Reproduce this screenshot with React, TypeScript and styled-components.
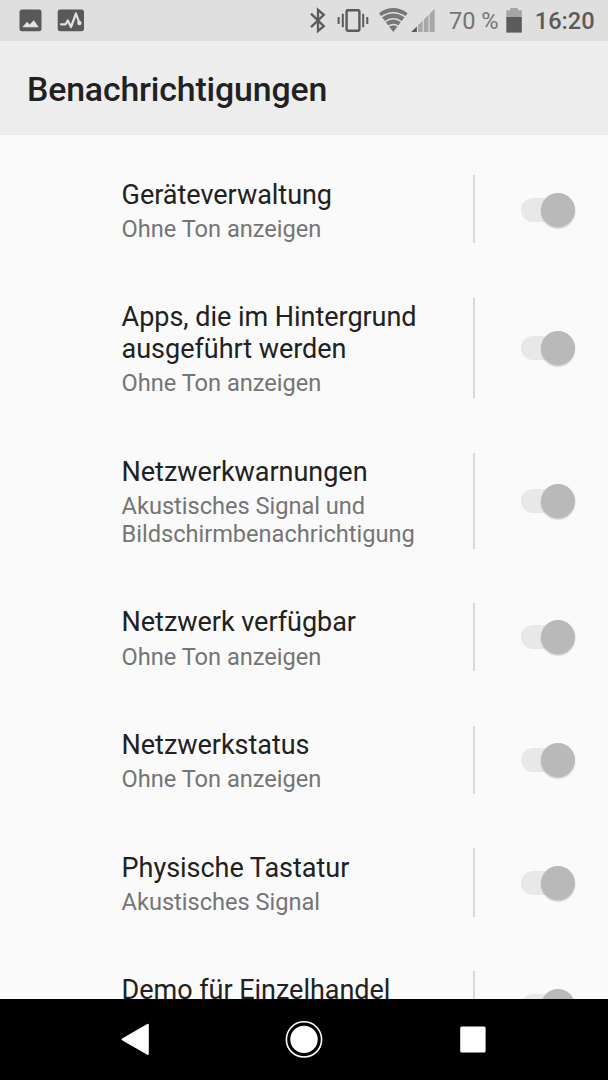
import React from 'react';
import styled, { createGlobalStyle } from 'styled-components';

const GlobalStyle = createGlobalStyle`
  html, body { margin: 0; padding: 0; }
  body { background: #fafafa; font-family: Roboto, sans-serif; overflow: hidden; }
`;

const Screen = styled.div`
  display: flex;
  flex-direction: column;
  width: 608px;
  height: 1080px;
  overflow: hidden;
  background: #fafafa;
`;

const StatusBar = styled.div`
  display: flex;
  flex: none;
  justify-content: space-between;
  height: 41px;
  background: #dfdfdf;
`;

const StatusIcons = styled.svg`
  display: block;
  flex: none;
`;

const StatusGroup = styled.div`
  display: flex;
  align-items: center;
`;

const StatusText = styled.span<{ $color: string; $width: number; $weight: number; $indent?: number }>`
  width: ${p => p.$width}px;
  padding: 1px 0 0 ${p => p.$indent ?? 0}px;
  box-sizing: border-box;
  color: ${p => p.$color};
  font-size: 23.6px;
  line-height: 41px;
  font-weight: ${p => p.$weight};
  white-space: nowrap;
`;

const Header = styled.header`
  display: flex;
  flex: none;
  align-items: center;
  height: 94px;
  padding: 3px 27px 0;
  box-sizing: border-box;
  background: #ededed;
`;

const Heading = styled.h1`
  margin: 0;
  color: #212121;
  font-size: 33.8px;
  font-weight: 500;
  line-height: 41px;
  letter-spacing: -0.14px;
  white-space: nowrap;
`;

const List = styled.main`
  display: flex;
  flex: 1;
  flex-direction: column;
  gap: 54.4px;
  min-height: 0;
  padding-top: 40.2px;
  overflow: hidden;
`;

const Row = styled.section`
  display: flex;
  flex: none;
  min-height: 68.3px;
  padding-left: 121.6px;
`;

const Texts = styled.div`
  width: 353.7px;
  padding-top: 3.4px;
  box-sizing: border-box;
  border-right: 2px solid #d8d8d8;
  white-space: nowrap;
`;

const Title = styled.div`
  color: #212121;
  font-size: 27.02px;
  line-height: 32px;
  letter-spacing: -0.04px;
`;

const SummaryBlock = styled.div`
  padding-top: 5.2px;
`;

const Summary = styled.div`
  color: #757575;
  font-size: 23.64px;
  line-height: 27.7px;
  letter-spacing: -0.03px;
`;

const SwitchCell = styled.div`
  display: flex;
  flex: 1;
  align-items: center;
  padding: 0.8px 0 0 46.2px;
`;

const Track = styled.div`
  display: flex;
  align-items: center;
  justify-content: flex-end;
  width: 54px;
  height: 24px;
  border-radius: 12px;
  background: linear-gradient(90deg, #e8e8e8 34px, transparent 34px);
`;

const Thumb = styled.div`
  width: 34px;
  height: 34px;
  border-radius: 50%;
  background: #b9b9b9;
  box-shadow: 0 1.5px 1.5px rgba(0, 0, 0, 0.2);
`;

const NavBar = styled.nav`
  flex: none;
  height: 81px;
  background: #000;
`;

const rows = [
  { title: ['Geräteverwaltung'], summary: ['Ohne Ton anzeigen'] },
  { title: ['Apps, die im Hintergrund', 'ausgeführt werden'], summary: ['Ohne Ton anzeigen'] },
  { title: ['Netzwerkwarnungen'], summary: ['Akustisches Signal und', 'Bildschirmbenachrichtigung'] },
  { title: ['Netzwerk verfügbar'], summary: ['Ohne Ton anzeigen'] },
  { title: ['Netzwerkstatus'], summary: ['Ohne Ton anzeigen'] },
  { title: ['Physische Tastatur'], summary: ['Akustisches Signal'] },
  { title: ['Demo für Einzelhandel'], summary: [] },
];

const NotificationGlyphs = () => (
  <StatusIcons width="100" height="41" viewBox="0 0 100 41">
    <rect x="19.5" y="9.5" width="22" height="21.7" rx="2.5" fill="#595959" />
    <path d="M22.3 27.2 L27 21.8 L29.6 24.6 L33.8 20.2 L38.8 27.2Z" fill="#e2e2e2" />
    <rect x="57.7" y="9.5" width="26.3" height="21.7" rx="2.5" fill="#595959" />
    <path d="M61 24.3H65.6L67.8 20.5L71 27L76 13.5L79.3 23" fill="none" stroke="#e2e2e2" strokeWidth="2.2" strokeLinejoin="round" strokeLinecap="round" />
    <circle cx="79.4" cy="23" r="2.2" fill="#e2e2e2" />
  </StatusIcons>
);

const ConnectivityGlyphs = () => (
  <StatusIcons width="144" height="41" viewBox="305 0 144 41">
    <path d="M311 13.6L323.8 26.2L318 31V9.8L323.8 14.8L311 27.2" fill="none" stroke="#5b5b5b" strokeWidth="2.3" />
    <rect x="346.6" y="10.2" width="12.8" height="20.6" rx="1.2" fill="none" stroke="#5b5b5b" strokeWidth="2.4" />
    <path d="M342.8 13.7V27.3M363.2 13.7V27.3M338.6 17V24M367.3 17V24" stroke="#5b5b5b" strokeWidth="2" />
    <path d="M379 13.2Q393.3 3 407.6 13.2L393.3 32Z" fill="#777" />
    <g fill="none" stroke="#dfdfdf" strokeWidth="1.5">
      <path d="M380.8 17.1Q393.3 8.2 405.8 17.1" />
      <path d="M384.6 22Q393.3 15.5 402 22" />
      <path d="M388 26.5Q393.3 22.3 398.6 26.5" />
    </g>
    <path d="M434.7 8.8V32H411.3Z" fill="#a8a8a8" />
    <path d="M416.9 26.5V32H411.3Z" fill="#5b5b5b" />
    <path d="M417.5 24V32M423.2 18V32M429 12V32" stroke="#dfdfdf" strokeWidth="1.1" />
  </StatusIcons>
);

const BatteryGlyph = () => (
  <StatusIcons width="30" height="41" viewBox="500 0 30 41">
    <path d="M506.3 10.2H510.3V8H517.8V10.2H521.8V17H506.3Z" fill="#a5a5a5" />
    <path d="M506.3 17H521.8V32.6H506.3Z" fill="#5b5b5b" />
  </StatusIcons>
);

export default function App() {
  return (
    <>
      <GlobalStyle />
      <Screen>
        <StatusBar>
          <NotificationGlyphs />
          <StatusGroup>
            <ConnectivityGlyphs />
            <StatusText $color="#757575" $width={51} $weight={400}>70 %</StatusText>
            <BatteryGlyph />
            <StatusText $color="#5b5b5b" $width={78} $weight={500} $indent={4.8}>16:20</StatusText>
          </StatusGroup>
        </StatusBar>
        <Header>
          <Heading>Benachrichtigungen</Heading>
        </Header>
        <List>
          {rows.map(row => (
            <Row key={row.title[0]}>
              <Texts>
                {row.title.map(line => <Title key={line}>{line}</Title>)}
                <SummaryBlock>
                  {row.summary.map(line => <Summary key={line}>{line}</Summary>)}
                </SummaryBlock>
              </Texts>
              <SwitchCell>
                <Track><Thumb /></Track>
              </SwitchCell>
            </Row>
          ))}
        </List>
        <NavBar>
          <svg width="608" height="81" viewBox="0 999 608 81">
            <path d="M147.8 1024.8V1054L122.6 1039.4Z" fill="#fff" stroke="#fff" strokeWidth="2" strokeLinejoin="round" />
            <circle cx="304" cy="1039.4" r="17.6" fill="none" stroke="#fff" strokeWidth="1.6" />
            <circle cx="304" cy="1039.4" r="13.7" fill="#fff" />
            <rect x="460.2" y="1026.6" width="25.4" height="25.8" rx="1.5" fill="#fff" />
          </svg>
        </NavBar>
      </Screen>
    </>
  );
}
